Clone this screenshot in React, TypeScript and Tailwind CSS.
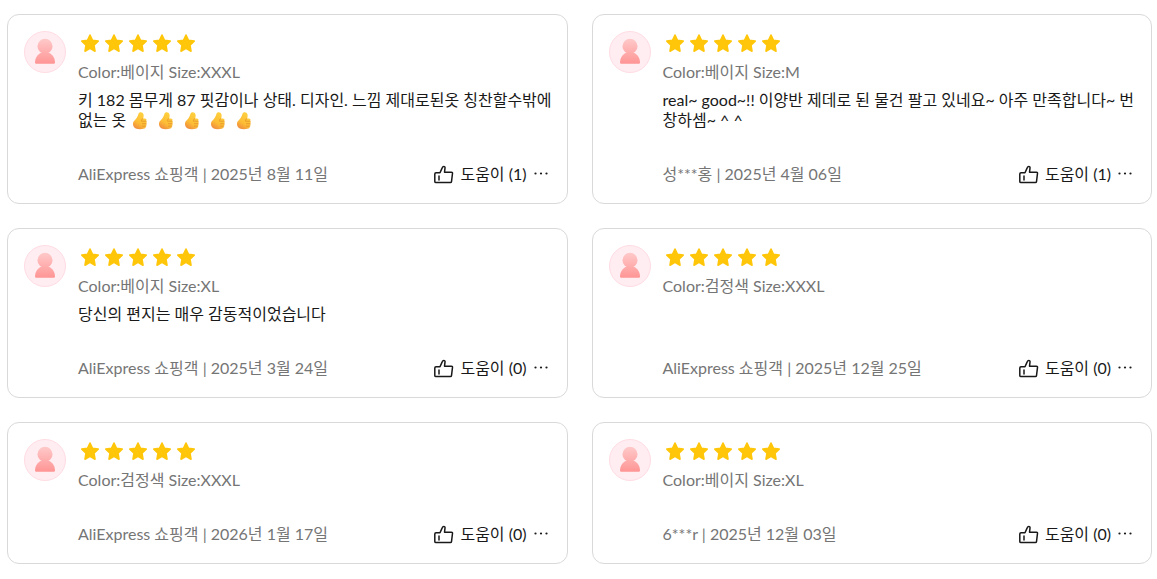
import React from 'react';

interface Review {
    id: number;
    sku: string;
    text?: string;
    likes?: number;
    author: string;
    date: string;
    helpful: number;
}

const reviews: Review[] = [
    { id: 1, sku: 'Color:베이지 Size:XXXL', text: '키 182 몸무게 87 핏감이나 상태. 디자인. 느낌 제대로된옷 칭찬할수밖에 없는 옷', likes: 5, author: 'AliExpress 쇼핑객', date: '2025년 8월 11일', helpful: 1 },
    { id: 2, sku: 'Color:베이지 Size:M', text: 'real~ good~!! 이양반 제데로 된 물건 팔고 있네요~ 아주 만족합니다~ 번창하셈~ ^ ^', author: '성***홍', date: '2025년 4월 06일', helpful: 1 },
    { id: 3, sku: 'Color:베이지 Size:XL', text: '당신의 편지는 매우 감동적이었습니다', author: 'AliExpress 쇼핑객', date: '2025년 3월 24일', helpful: 0 },
    { id: 4, sku: 'Color:검정색 Size:XXXL', author: 'AliExpress 쇼핑객', date: '2025년 12월 25일', helpful: 0 },
    { id: 5, sku: 'Color:검정색 Size:XXXL', author: 'AliExpress 쇼핑객', date: '2026년 1월 17일', helpful: 0 },
    { id: 6, sku: 'Color:베이지 Size:XL', author: '6***r', date: '2025년 12월 03일', helpful: 0 },
];

const Avatar = () => (
    <svg viewBox="0 0 42 42" className="h-[42px] w-[42px] shrink-0" aria-hidden="true">
        <defs>
            <linearGradient id="person" gradientUnits="userSpaceOnUse" x1="21" y1="8" x2="21" y2="33">
                <stop offset="0" stopColor="#ffc9c9" />
                <stop offset="1" stopColor="#ff9494" />
            </linearGradient>
        </defs>
        <circle cx="21" cy="21" r="20.5" fill="#ffedf2" stroke="#ffdce3" />
        <g fill="url(#person)">
            <circle cx="21" cy="15.3" r="7.5" />
            <path d="M11 31.500c0-4.500 2.300-7.800 6-9.800h8c3.700 2 6 5.300 6 9.800 0 .8-.4 1.200-1.200 1.200H12.200c-.8 0-1.200-.4-1.200-1.200z" />
        </g>
    </svg>
);

const Star = () => (
    <svg viewBox="0 0 24 24" className="h-6 w-6" fill="#ffc60a" stroke="#ffc60a" strokeWidth="1.6" strokeLinejoin="round" aria-hidden="true">
        <path d="M12 4l2.500 5.300 5.700.8-4.200 4 1 6.100-5-2.900-5 2.900 1-6.100-4.200-4 5.700-.8z" />
    </svg>
);

const ThumbEmoji = () => (
    <svg viewBox="0 0 18 18" className="h-[18px] w-[18px]" aria-hidden="true">
        <defs>
            <linearGradient id="hand" x1=".7" y1="0" x2=".2" y2="1">
                <stop offset="0" stopColor="#ffd23f" />
                <stop offset=".6" stopColor="#fdbd35" />
                <stop offset="1" stopColor="#ee8840" />
            </linearGradient>
        </defs>
        <path d="M1.800 9.200C3.800 7.200 5.800 5 6.400 2 6.800-.4 10.900-.5 11.500 2.400c.3 1.500.1 2.700-.3 4h1.700c1.700 0 2.100 1.800 1.100 2.600.9.600.9 2 .1 2.600.7.700.5 2-.4 2.400.4 1.200-.2 2.100-1.300 2.400-3 1.100-6.500 1-8.700.1C2.300 15.800 1.200 14.400 1 12.500c-.1-1.300.1-2.400.8-3.300z" fill="url(#hand)" />
        <path d="M10.600 6.700c-.9.600-1.300 1.400-1.200 2.400M10.500 9.200h3.700M10.500 11.700h3.700M10.500 14.100h3.300" fill="none" stroke="#e08a28" strokeWidth=".7" strokeLinecap="round" />
    </svg>
);

const ThumbIcon = () => (
    <svg viewBox="0 0 20 20" className="h-5 w-5" fill="none" stroke="currentColor" strokeWidth="1.5" strokeLinejoin="round" strokeLinecap="round" aria-hidden="true">
        <path d="M2 8.700h4L8.300 3.600c.3-.8.700-1.200 1.400-1.200 1 0 1.500.8 1.300 1.800L10.500 8.200h7c.7 0 1.100.5 1 1.200l-1 8.200c-.1.600-.5 1-1.100 1H2c-.8 0-1.200-.4-1.200-1.200V9.900c0-.8.4-1.200 1.200-1.200z" />
        <path d="M5 12v4" />
    </svg>
);

const ReviewCard = ({ review }: { review: Review }) => (
    <article className="flex gap-3 rounded-xl border border-[#d9d9d9] bg-white px-4 pt-4 pb-[17px]">
        <Avatar />
        <div className="flex min-w-0 flex-1 flex-col">
            <div className="flex h-6" role="img" aria-label="5 / 5">
                {[1, 2, 3, 4, 5].map((n) => (
                    <Star key={n} />
                ))}
            </div>
            <p className="mt-[7px] text-[#757575]">{review.sku}</p>
            {review.text && (
                <p className="-mr-2 mt-2 break-all text-[#191919]">
                    {review.text}
                    {review.likes && (
                        <span className="ml-1.5 inline-flex gap-2 align-bottom">
                            {Array.from({ length: review.likes }, (_, i) => (
                                <ThumbEmoji key={i} />
                            ))}
                        </span>
                    )}
                </p>
            )}
            <div className="mt-auto pt-8">
                <div className="flex h-6 items-center justify-between">
                    <span className="text-[#757575]">
                        {review.author} | {review.date}
                    </span>
                    <div className="flex items-center gap-1.5 text-[#191919]">
                        <button type="button" className="flex cursor-pointer items-center gap-1.5">
                            <ThumbIcon />
                            <span>도움이 ({review.helpful})</span>
                        </button>
                        <button type="button" className="cursor-pointer" aria-label="더보기">
                            <svg viewBox="0 0 18 18" className="h-[18px] w-[18px]" fill="currentColor" aria-hidden="true">
                                <circle cx="2.5" cy="8.5" r="1.1" />
                                <circle cx="8" cy="8.5" r="1.1" />
                                <circle cx="13.5" cy="8.5" r="1.1" />
                            </svg>
                        </button>
                    </div>
                </div>
            </div>
        </div>
    </article>
);

const App = () => {
    return (
        <main className="grid grid-cols-2 gap-6 bg-white pt-3.5 pr-[5px] pb-4 pl-[7px] font-[Lato,'Noto_Sans_CJK_KR',sans-serif] text-base leading-5">
            {reviews.map((review) => (
                <ReviewCard key={review.id} review={review} />
            ))}
        </main>
    );
};

export default App;
